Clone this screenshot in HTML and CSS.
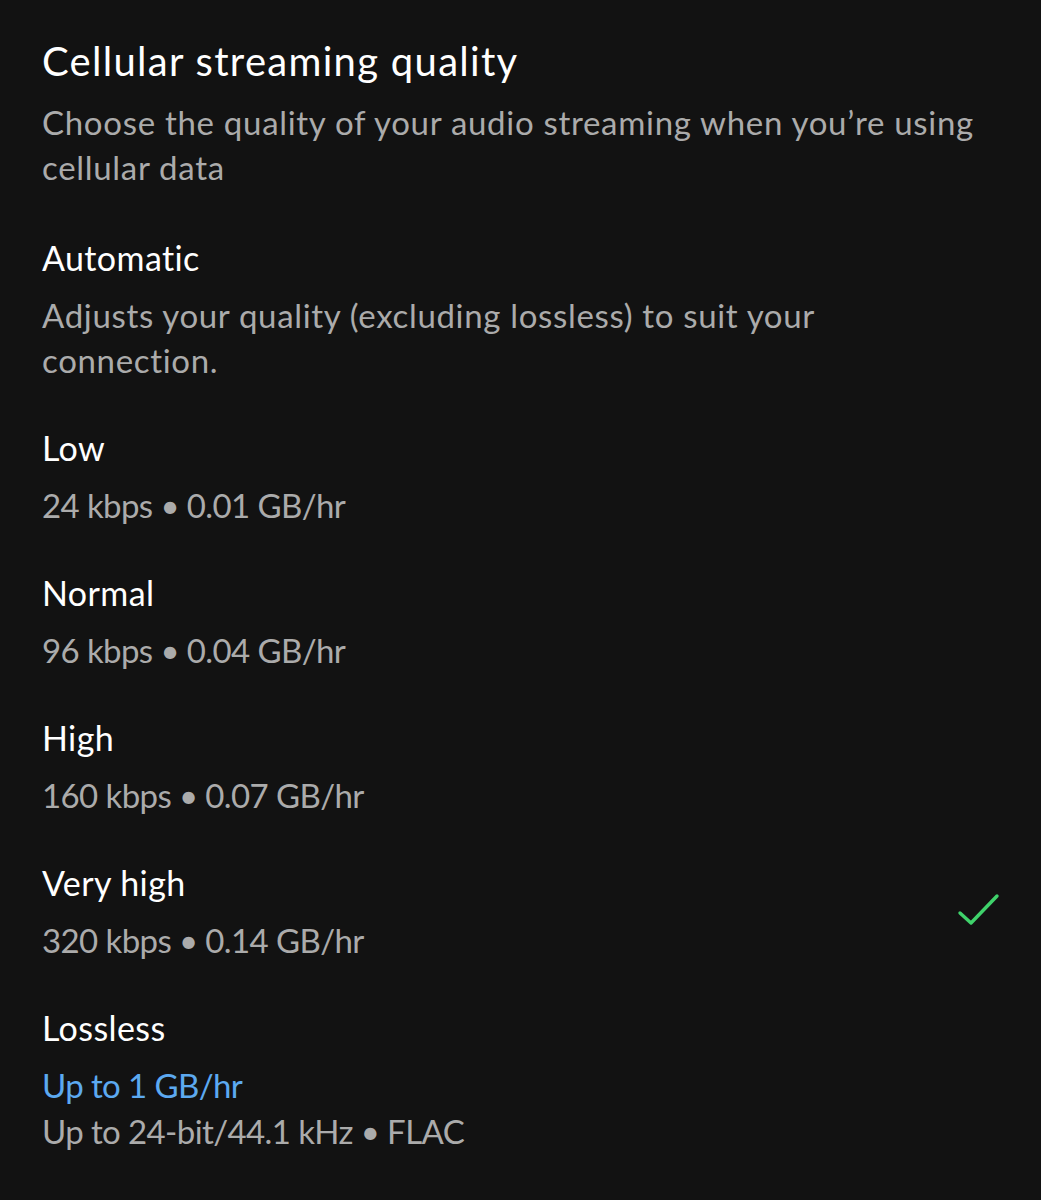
FILE: index.html
```html
<!DOCTYPE html>
<html>
<head>
<meta charset="utf-8">
<link rel="stylesheet" href="styles.css">
</head>
<body>
<div class="page">
  <header class="head">
    <h1 class="title">Cellular streaming quality</h1>
    <p class="sub">Choose the quality of your audio streaming when you’re using cellular data</p>
  </header>
  <ul class="options">
    <li class="opt">
      <div class="text">
        <div class="name">Automatic</div>
        <div class="desc">Adjusts your quality (excluding lossless) to suit your connection.</div>
      </div>
    </li>
    <li class="opt">
      <div class="text">
        <div class="name">Low</div>
        <div class="desc num">24 kbps • 0.01 GB/hr</div>
      </div>
    </li>
    <li class="opt">
      <div class="text">
        <div class="name">Normal</div>
        <div class="desc num">96 kbps • 0.04 GB/hr</div>
      </div>
    </li>
    <li class="opt">
      <div class="text">
        <div class="name">High</div>
        <div class="desc num">160 kbps • 0.07 GB/hr</div>
      </div>
    </li>
    <li class="opt">
      <div class="text">
        <div class="name">Very high</div>
        <div class="desc num">320 kbps • 0.14 GB/hr</div>
      </div>
      <svg class="check" width="44" height="44" viewBox="0 0 44 44"><path d="M4 23 L15 33 L41 6" fill="none" stroke="#3fd26b" stroke-width="3.4" stroke-linecap="round" stroke-linejoin="round"/></svg>
    </li>
    <li class="opt">
      <div class="text">
        <div class="name">Lossless</div>
        <div class="desc num blue">Up to 1 GB/hr</div>
        <div class="desc num tight">Up to 24-bit/44.1 kHz • FLAC</div>
      </div>
    </li>
  </ul>
</div>
</body>
</html>
```
FILE: styles.css
```css
html, body {
  margin: 0;
  padding: 0;
  background: #121212;
}
body {
  font-family: Lato, "Noto Sans", sans-serif;
  color: #ffffff;
}
.page {
  width: 1041px;
  height: 1200px;
  box-sizing: border-box;
  padding: 37px 41px 0 42px;
}
.head {
  margin: 0;
}
.title {
  margin: 0;
  font-size: 40px;
  line-height: 48px;
  font-weight: 400;
  letter-spacing: 1.3px;
  color: #ffffff;
}
.sub {
  margin: 15px 0 0 0;
  font-size: 33px;
  line-height: 45px;
  letter-spacing: 0.7px;
  color: #ababab;
  width: 957px;
}
.options {
  list-style: none;
  margin: 45px 0 0 0;
  padding: 0;
  display: flex;
  flex-direction: column;
  gap: 42px;
}
.opt {
  display: flex;
  align-items: center;
  justify-content: space-between;
}
.text {
  display: flex;
  flex-direction: column;
}
.name {
  font-size: 34px;
  line-height: 45px;
  letter-spacing: 0.4px;
  color: #ffffff;
  margin-bottom: 13px;
}
.desc {
  font-size: 33px;
  line-height: 45px;
  letter-spacing: 0.67px;
  color: #ababab;
  width: 840px;
}
.desc.num {
  letter-spacing: -0.6px;
}
.desc.tight {
  margin-top: 1px;
}
.desc.blue {
  color: #5ca9f0;
}
.check {
  flex: none;
}
```
